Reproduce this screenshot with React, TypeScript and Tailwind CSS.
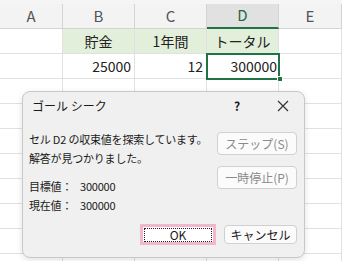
import React from 'react';

const cols = [
  { key: 'A', w: 'w-[63px]' },
  { key: 'B', w: 'w-[72px]' },
  { key: 'C', w: 'w-[72px]' },
  { key: 'D', w: 'w-[72px]' },
  { key: 'E', w: 'w-[63px]' },
];

const jp = { fontFamily: '"Noto Sans CJK JP", "Noto Sans", sans-serif' };

const Cell = ({ w, children, className = '' }: { w: string; children?: React.ReactNode; className?: string }) => (
  <div className={`${w} h-[25px] shrink-0 border-r border-b border-[#e1e1e1] flex items-center text-[14px] text-[#222] ${className}`}>
    {children}
  </div>
);

const Btn = ({ children, className = '' }: { children: React.ReactNode; className?: string }) => (
  <div className={`shrink-0 rounded-[4px] border border-[#d0d0d0] bg-[#fbfbfb] flex items-center justify-center text-[12px] whitespace-nowrap ${className}`}>
    {children}
  </div>
);

export default function App() {
  return (
    <div className="relative w-[342px] h-[261px] bg-white overflow-hidden" style={jp}>
      {/* column headers */}
      <div className="flex h-[29px] bg-[#f5f5f5] pt-[4px]">
        {cols.map((c) => (
          <div
            key={c.key}
            className={`${c.w} shrink-0 flex items-center justify-center text-[15px] border-r border-[#d4d4d4] ${
              c.key === 'D'
                ? 'bg-[#e1e1e1] text-[#1e6a3f] border-b-2 border-b-[#217346]'
                : 'bg-[#f3f3f3] text-[#555] border-b border-b-[#d4d4d4]'
            }`}
          >
            {c.key}
          </div>
        ))}
      </div>

      {/* row 1 */}
      <div className="flex">
        <Cell w="w-[63px]" />
        <Cell w="w-[72px]" className="bg-[#e2efda] justify-center">貯金</Cell>
        <Cell w="w-[72px]" className="bg-[#e2efda] justify-center">1年間</Cell>
        <Cell w="w-[72px]" className="bg-[#e2efda] justify-center">トータル</Cell>
        <Cell w="w-[63px]" />
      </div>

      {/* row 2 */}
      <div className="flex">
        <Cell w="w-[63px]" />
        <Cell w="w-[72px]" className="justify-end pr-[3px]">25000</Cell>
        <Cell w="w-[72px]" className="justify-end pr-[3px]">12</Cell>
        <div className="relative w-[72px] h-[25px] shrink-0 border-b border-[#e1e1e1] flex items-center justify-end pr-[2px] text-[14px] text-[#222]">
          300000
          <div className="absolute left-[-1px] top-[-1px] w-[74px] h-[27px] border-2 border-[#217346]" />
          <div className="absolute right-[-4px] bottom-[-4px] w-[6px] h-[6px] bg-[#217346] border border-white" />
        </div>
        <Cell w="w-[63px]" />
      </div>

      {[0, 1, 2, 3, 4, 5, 6, 7].map((r) => (
        <div key={r} className="flex">
          {cols.map((c) => (
            <Cell key={c.key} w={c.w} />
          ))}
        </div>
      ))}

      {/* goal seek dialog */}
      <div className="absolute left-[22px] top-[91px] w-[283px] h-[167px] rounded-[8px] border border-[#c8c8c8] bg-[#f0f0f0] shadow-[0_2px_6px_rgba(0,0,0,0.12)] text-[#1a1a1a]">
        <div className="flex items-center h-[28px] pl-[9px] pr-[12px] text-[12px]">
          <span className="flex-1">ゴール シーク</span>
          <span className="w-[14px] text-center font-bold mr-[33px]">?</span>
          <svg width="12" height="12" viewBox="0 0 12 12" className="mr-[3px]">
            <path d="M1 1 L11 11 M11 1 L1 11" stroke="#333" strokeWidth="1.2" />
          </svg>
        </div>
        <div className="flex pl-[6px] pr-[7px] mt-[10px]">
          <div className="flex-1 min-w-0 text-[11px] leading-[19px] whitespace-nowrap tracking-[-0.2px]">
            <div>セル D2 の収束値を探索しています。</div>
            <div>解答が見つかりました。</div>
            <div className="mt-[9px] flex">
              <span className="w-[51px]">目標値：</span>
              <span>300000</span>
            </div>
            <div className="flex">
              <span className="w-[51px]">現在値：</span>
              <span>300000</span>
            </div>
          </div>
          <div className="flex flex-col gap-[11px] pt-[2px]">
            <Btn className="w-[80px] h-[23px] text-[#8a8a8a]">ステップ(S)</Btn>
            <Btn className="w-[80px] h-[23px] text-[#8a8a8a]">一時停止(P)</Btn>
          </div>
        </div>
        <div className="flex justify-end gap-[8px] pr-[7px] mt-[9px]">
          <div className="w-[76px] h-[21px] border-[3px] border-[#f2b6cd] bg-white flex items-center justify-center">
            <div className="w-[68px] h-[14px] border border-dotted border-[#222] flex items-center justify-center text-[12px]">OK</div>
          </div>
          <Btn className="w-[73px] h-[19px] mt-[1px] text-[#1a1a1a]">キャンセル</Btn>
        </div>
      </div>
    </div>
  );
}
